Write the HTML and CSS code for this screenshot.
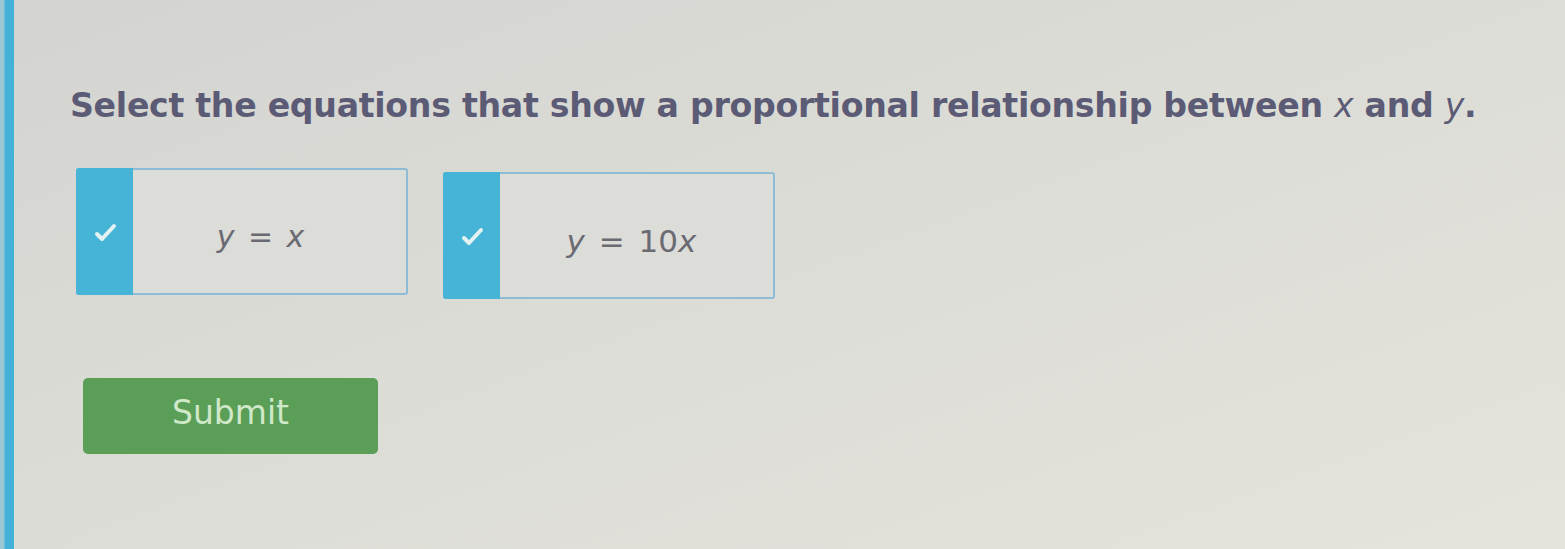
FILE: index.html
```html
<!DOCTYPE html>
<html lang="en">
<head>
    <meta charset="UTF-8">
    <meta name="viewport" content="width=device-width, initial-scale=1.0">
    <title>Proportional relationships</title>
    <link rel="stylesheet" href="styles.css">
</head>
<body>

<div class="page">
    <div class="side-bar"></div>

    <div class="question">
        <p class="prompt">Select the equations that show a proportional relationship between <i>x</i> and <i>y</i>.</p>

        <div class="choices">
            <label class="choice">
                <span class="choice-check">
                    <svg width="26" height="22" viewBox="0 0 26 22"><path d="M5 13 L10 18 L22 5" fill="none" stroke="#e4f2f2" stroke-width="4" stroke-linecap="round" stroke-linejoin="round"/></svg>
                </span>
                <span class="choice-text"><span><i>y</i> = <i>x</i></span></span>
            </label>

            <label class="choice choice-second">
                <span class="choice-check">
                    <svg width="26" height="22" viewBox="0 0 26 22"><path d="M5 13 L10 18 L22 5" fill="none" stroke="#e4f2f2" stroke-width="4" stroke-linecap="round" stroke-linejoin="round"/></svg>
                </span>
                <span class="choice-text"><span><i>y</i> = 10<i>x</i></span></span>
            </label>
        </div>

        <button class="submit">Submit</button>
    </div>
</div>

</body>
</html>
```

FILE: styles.css
```css
body {
    margin: 0;
    font-family: "DejaVu Sans", Verdana, sans-serif;
    background: linear-gradient(160deg, #d3d3d1 0%, #dcdcd6 45%, #e4e3dc 100%);
    height: 549px;
    overflow: hidden;
}

.page {
    display: flex;
    height: 100%;
}

.side-bar {
    width: 14px;
    background: linear-gradient(90deg, #9cc8d6 0px, #9cc8d6 4px, #44b2d8 5px, #44b2d8 14px);
    flex-shrink: 0;
}

.question {
    padding: 86px 0 0 56px;
}

.prompt {
    margin: 0;
    font-size: 33.2px;
    font-weight: bold;
    color: #5c5b76;
    letter-spacing: -0.3px;
}

.prompt i {
    font-weight: normal;
}

.choices {
    display: flex;
    gap: 35px;
    margin-top: 43px;
    margin-left: 6px;
}

.choice {
    display: flex;
    width: 332px;
    height: 127px;
    box-sizing: border-box;
    border: 2px solid #8ebbd6;
    border-radius: 3px;
    background: #dcdcd8;
}

.choice-second {
    margin-top: 4px;
}

.choice-check {
    width: 57px;
    background: #45b4d6;
    display: flex;
    align-items: center;
    justify-content: center;
    margin: -2px 0 -2px -2px;
    border-radius: 3px 0 0 3px;
}

.choice-text {
    flex: 1;
    display: flex;
    align-items: center;
    justify-content: center;
    font-size: 30px;
    color: #6a6a72;
    padding: 10px 18px 0 0;
    word-spacing: 4px;
}

.choice-second .choice-text {
    font-size: 31px;
    padding-left: 8px;
}

.submit {
    margin-top: 79px;
    margin-left: 13px;
    width: 295px;
    height: 76px;
    background-color: #5a9e57;
    border: none;
    border-radius: 5px;
    color: #cfe8c8;
    font-family: "DejaVu Sans", Verdana, sans-serif;
    font-size: 33px;
    padding: 0 0 8px 0;
    cursor: pointer;
}
```
